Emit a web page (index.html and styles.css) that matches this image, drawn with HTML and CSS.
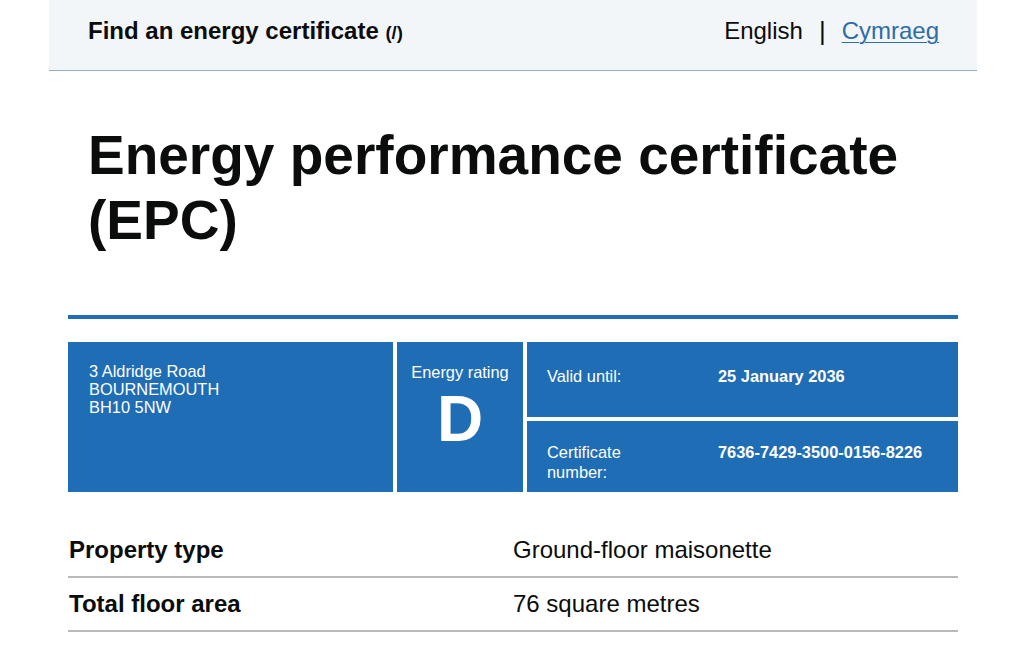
FILE: index.html
```html
<!DOCTYPE html>
<html lang="en">
<head>
<meta charset="utf-8">
<title>Energy performance certificate (EPC)</title>
<link rel="stylesheet" href="styles.css">
</head>
<body>
<header class="site-header">
  <div class="service-name">Find an energy certificate <span class="slash">(/)</span></div>
  <nav class="lang">
    <span class="lang-current">English</span>
    <span class="lang-sep">|</span>
    <a class="lang-link" href="#">Cymraeg</a>
  </nav>
</header>
<main class="main">
  <h1 class="title">Energy performance certificate (EPC)</h1>
  <div class="rule"></div>
  <section class="summary">
    <div class="address">3 Aldridge Road<br>BOURNEMOUTH<br>BH10 5NW</div>
    <div class="rating">
      <div class="rating-label">Energy rating</div>
      <div class="rating-letter">D</div>
    </div>
    <div class="meta">
      <div class="meta-row meta-valid">
        <div class="meta-label">Valid until:</div>
        <div class="meta-value">25 January 2036</div>
      </div>
      <div class="meta-row">
        <div class="meta-label">Certificate<br>number:</div>
        <div class="meta-value">7636-7429-3500-0156-8226</div>
      </div>
    </div>
  </section>
  <dl class="details">
    <div class="detail-row">
      <dt>Property type</dt>
      <dd>Ground-floor maisonette</dd>
    </div>
    <div class="detail-row">
      <dt>Total floor area</dt>
      <dd>76 square metres</dd>
    </div>
  </dl>
</main>
</body>
</html>
```
FILE: styles.css
```css
* { box-sizing: border-box; }
html, body { margin: 0; padding: 0; background: #ffffff; }
body {
  font-family: "Liberation Sans", Arial, sans-serif;
  color: #0b0c0c;
}
.site-header {
  margin: 0 47px 0 49px;
  height: 71px;
  background: #f3f6f9;
  border-bottom: 1px solid #8fb2cc;
  display: flex;
  align-items: center;
  justify-content: space-between;
  padding: 0 38px 8px 39px;
}
.service-name {
  font-size: 24px;
  font-weight: bold;
}
.slash { font-size: 18.5px; }
.lang {
  display: flex;
  align-items: center;
  font-size: 24px;
}
.lang-sep { margin: 0 16px 0 16px; font-size: 26px; }
.lang-link { color: #2d6da8; text-decoration: underline; text-underline-offset: 3px; text-decoration-thickness: 1px; }
.main {
  margin: 0 66px 0 68px;
}
.title {
  margin: 52px 0 0 0;
  padding: 0 20px;
  font-size: 55px;
  line-height: 65px;
  font-weight: bold;
}
.rule {
  margin-top: 62px;
  height: 4px;
  background: #1f6db5;
}
.summary {
  margin-top: 23px;
  display: grid;
  grid-template-columns: 325px 126px 1fr;
  gap: 4px;
  height: 150px;
  color: #ffffff;
  font-size: 16.4px;
}
.address {
  background: #1f6db5;
  padding: 20px 21px;
  line-height: 18px;
}
.rating {
  background: #1f6db5;
  text-align: center;
  padding-top: 20px;
}
.rating-label { line-height: 20px; }
.rating-letter {
  font-size: 64px;
  font-weight: bold;
  line-height: 64px;
  margin-top: 5px;
}
.meta {
  display: grid;
  grid-template-rows: 75px 1fr;
  gap: 4px;
}
.meta-row {
  background: #1f6db5;
  display: grid;
  grid-template-columns: 171px 1fr;
  padding: 21px 20px 0 20px;
  line-height: 20px;
}
.meta-valid { padding-top: 24px; }
.meta-value { font-weight: bold; }
.details { margin: 32px 0 0 0; }
.detail-row {
  display: grid;
  grid-template-columns: 445px 1fr;
  padding: 13px 0 14px;
  border-bottom: 2px solid #b8b9ba;
  font-size: 24px;
  line-height: 25px;
}
.detail-row dt { font-weight: bold; margin: 0; padding-left: 1px; }
.detail-row dd { margin: 0; }
```
